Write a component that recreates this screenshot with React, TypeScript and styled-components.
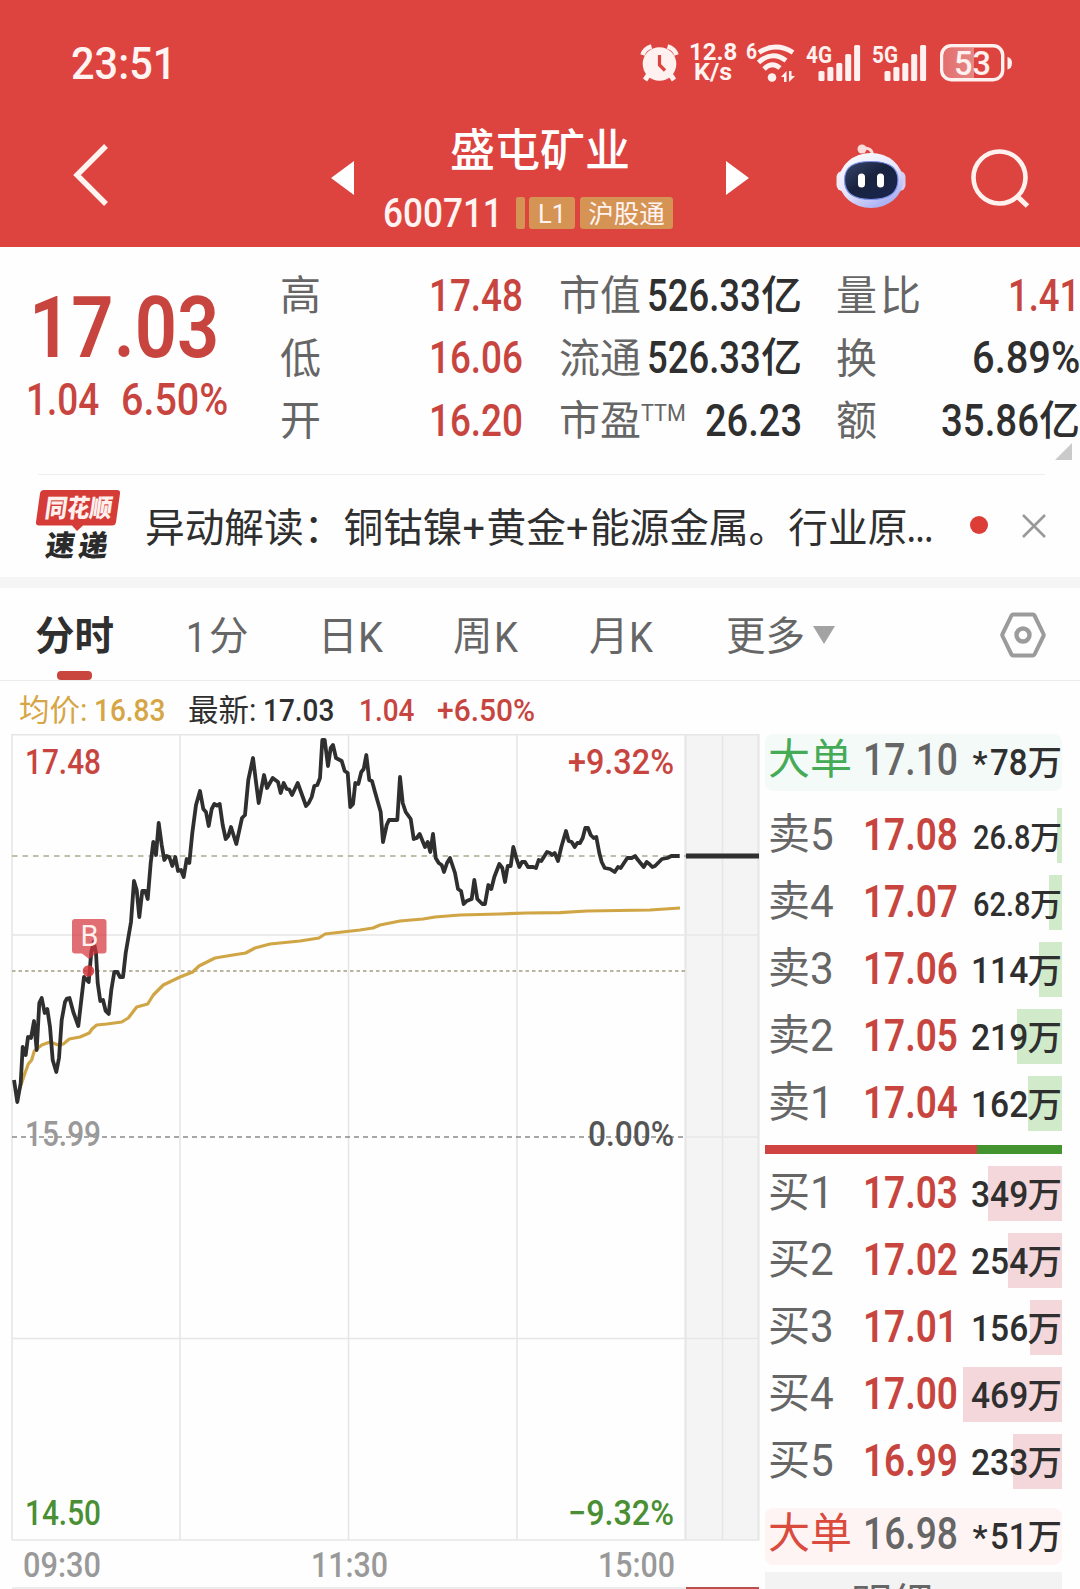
import React, { useLayoutEffect, useRef, useState } from "react";
import styled, { createGlobalStyle } from "styled-components";

const FONT = `Roboto, "Noto Sans CJK SC", sans-serif`;
const RED = "#c8453f";
const INK = "#2f2f2f";
const GREY = "#666666";

const GlobalStyle = createGlobalStyle`
  * { box-sizing: border-box; }
  body { margin: 0; background: #fff; font-family: ${FONT}; color: ${INK}; }
  svg { overflow: visible; }
`;

/* ---------- condensed text ---------- */

const FitBox = styled.span<{ $w: number; $h: number; $size: number; $weight: number; $color?: string }>`
  display: block;
  flex: none;
  width: ${(p) => p.$w}px;
  height: ${(p) => p.$h}px;
  line-height: ${(p) => p.$h}px;
  font-size: ${(p) => p.$size}px;
  font-weight: ${(p) => p.$weight};
  color: ${(p) => p.$color ?? "inherit"};
  white-space: nowrap;
`;

const FitInner = styled.span`
  display: inline-block;
  transform-origin: 0 50%;
`;

type FitProps = { w: number; size: number; h?: number; weight?: number; color?: string; children: string };

/* Squeezes a run of text to a set width, for narrow figures. */
function Fit({ w, size, h = size, weight = 500, color, children }: FitProps) {
  const ref = useRef<HTMLSpanElement>(null);
  const [scale, setScale] = useState(1);
  useLayoutEffect(() => {
    if (ref.current) setScale(w / ref.current.offsetWidth);
  }, [w, size, weight, children]);
  return (
    <FitBox $w={w} $h={h} $size={size} $weight={weight} $color={color}>
      <FitInner ref={ref} style={{ transform: `scaleX(${scale})` }}>
        {children}
      </FitInner>
    </FitBox>
  );
}

/* ---------- page ---------- */

const Page = styled.div`
  width: 1080px;
  height: 1589px;
  overflow: hidden;
  background: #fefefe;
  display: flex;
  flex-direction: column;
`;

/* ---------- header ---------- */

const Header = styled.header`
  flex: none;
  height: 247px;
  background: #dd4440;
  color: #fff4f2;
`;

const StatusBar = styled.div`
  height: 126px;
  padding: 0 67px 0 71px;
  display: flex;
  align-items: center;
`;

const Clock = styled.div`
  padding-top: 4px;
`;

const StatusIcons = styled.div`
  margin-left: auto;
  display: flex;
  align-items: center;
`;

const Speed = styled.div`
  margin: 0 8px 0 11px;
  display: flex;
  flex-direction: column;
  align-items: center;
`;

const Signal = styled.div`
  margin-left: 11px;
  width: 55px;
  height: 36px;
`;

const NavBar = styled.div`
  height: 121px;
  padding: 0 0 0 72px;
  display: flex;
  align-items: flex-start;
`;

const IconSlot = styled.div<{ $ml?: number; $mt: number }>`
  flex: none;
  display: flex;
  margin-left: ${(p) => p.$ml ?? 0}px;
  margin-top: ${(p) => p.$mt}px;
`;

const TitleBlock = styled.div`
  flex: none;
  width: 300px;
  margin-left: 29px;
  display: flex;
  flex-direction: column;
`;

const StockName = styled.h1`
  margin: 1px 0 0 67px;
  font-size: 45px;
  line-height: 50px;
  font-weight: 500;
  color: #fff;
`;

const CodeRow = styled.div`
  margin-top: 20px;
  height: 32px;
  display: flex;
  align-items: center;
`;

const GoldBar = styled.i`
  flex: none;
  width: 9px;
  height: 32px;
  margin: 0 4px 0 13px;
  border-radius: 2px;
  background: #d59354;
`;

const Badge = styled.span<{ $w: number }>`
  flex: none;
  width: ${(p) => p.$w}px;
  height: 32px;
  margin-right: 5px;
  border-radius: 3px;
  background: #d59354;
  display: flex;
  align-items: center;
  justify-content: center;
  font-size: 25.5px;
  line-height: 32px;
  padding-top: 1px;
`;

/* ---------- quote ---------- */

const Quote = styled.section`
  flex: none;
  height: 227px;
  padding-top: 18px;
  display: grid;
  grid-template-columns: 280px 243px 36px 243px 34px 244px;
  grid-template-rows: 188px;
`;

const PriceBlock = styled.div`
  padding: 21px 0 0 26px;
`;

const LastPrice = styled.div`
  padding-left: 3px;
`;

const ChangeRow = styled.div`
  display: flex;
  gap: 22px;
  padding-top: 8px;
`;

const StatList = styled.div<{ $col: number }>`
  grid-column: ${(p) => p.$col};
  display: flex;
  flex-direction: column;
`;

const Stat = styled.div`
  flex: none;
  height: 62.5px;
  display: flex;
  align-items: center;
  justify-content: space-between;
`;

const StatLabel = styled.span`
  display: flex;
  color: ${GREY};
  font-size: 41px;
  line-height: 50px;
  font-weight: 400;
`;

const Ttm = styled.span`
  display: flex;
  margin-top: 6px;
`;

const StatValue = styled.span`
  display: flex;
  align-items: center;
`;

const Unit = styled.span<{ $size: number }>`
  font-size: ${(p) => p.$size}px;
  line-height: ${(p) => p.$size}px;
  font-weight: 500;
`;

const Corner = styled.i`
  flex: none;
  align-self: flex-end;
  margin: -10px 8px 0 0;
  border-left: 17px solid transparent;
  border-bottom: 17px solid #cacaca;
`;

/* ---------- news ---------- */

const News = styled.section`
  flex: none;
  height: 103px;
  margin: 0 35px 0 38px;
  border-top: 1px solid #eeeeee;
  display: flex;
  align-items: center;
`;

const Brand = styled.div`
  flex: none;
  width: 84px;
  height: 74px;
  margin: -1px 0 0 -2px;
`;

const Headline = styled.p`
  flex: none;
  display: flex;
  width: 809px;
  margin: 5px 0 0 25px;
  font-size: 39.7px;
  line-height: 50px;
  white-space: nowrap;
`;

const Plus = styled.span`
  display: block;
  width: 24px;
`;

const Dot = styled.i`
  flex: none;
  width: 18px;
  height: 18px;
  margin: -2px 34px 0 16px;
  border-radius: 50%;
  background: #dc3d36;
`;

const Band = styled.div`
  flex: none;
  height: 11px;
  background: #f5f5f5;
`;

/* ---------- tabs ---------- */

const Tabs = styled.nav`
  flex: none;
  height: 93px;
  padding: 0 34px 0 35px;
  border-bottom: 1px solid #ebebeb;
  display: flex;
  align-items: stretch;
`;

const Tab = styled.div<{ $active?: boolean; $w: number }>`
  width: ${(p) => p.$w}px;
  padding-top: 19px;
  display: flex;
  flex-direction: column;
  justify-content: space-between;
  font-size: 39.5px;
  line-height: 60px;
  font-weight: ${(p) => (p.$active ? 700 : 400)};
  color: ${(p) => (p.$active ? INK : GREY)};
`;

const TabText = styled.span<{ $gap?: number }>`
  display: flex;
  align-items: center;
  height: 60px;
  gap: ${(p) => p.$gap ?? 0}px;
`;

const Underline = styled.i`
  width: 35px;
  height: 9px;
  margin-left: 22px;
  border-radius: 4px;
  background: #c9463f;
`;

const Caret = styled.i`
  margin: 0 0 4px 8px;
  border: 11px solid transparent;
  border-top: 18px solid #a3a3a3;
  border-bottom: 0;
`;

const SettingsSlot = styled.div`
  margin: 24px 0 0 auto;
`;

/* ---------- legend ---------- */

const Legend = styled.div`
  flex: none;
  height: 53px;
  padding: 7px 0 0 19px;
  display: flex;
  align-items: center;
`;

const LegendLabel = styled.span<{ $color: string }>`
  font-size: 30.5px;
  line-height: 40px;
  width: 75px;
  white-space: nowrap;
  color: ${(p) => p.$color};
`;

const Space = styled.i<{ $w: number }>`
  flex: none;
  width: ${(p) => p.$w}px;
`;

/* ---------- market area ---------- */

const Market = styled.main`
  flex: 1;
  min-height: 0;
  display: flex;
  overflow: hidden;
`;

const ChartPane = styled.div`
  flex: none;
  width: 765px;
`;

const Book = styled.aside`
  width: 297px;
  flex: none;
  display: flex;
  flex-direction: column;
`;

const Levels = styled.div`
  display: flex;
  flex-direction: column;
  gap: 12px;
`;

const Level = styled.div<{ $bar: number; $tint: string }>`
  flex: none;
  height: 55px;
  padding: 0 0 0 3px;
  display: grid;
  grid-template-columns: 95px 98px 1fr;
  align-items: center;
  background: ${(p) =>
    `linear-gradient(to left, ${p.$tint} ${p.$bar}px, transparent ${p.$bar}px)`};
`;

const BigDeal = styled(Level)<{ $bg: string }>`
  height: 57px;
  border-radius: 8px;
  background: ${(p) => p.$bg};
  padding-bottom: 3px;
`;

const LevelName = styled.span<{ $color: string }>`
  display: flex;
  align-items: center;
  font-size: 42px;
  line-height: 50px;
  padding-bottom: 2px;
  color: ${(p) => p.$color};
`;

const Volume = styled.span`
  display: flex;
  justify-content: flex-end;
  align-items: center;
  padding-top: 4px;
`;

const Ratio = styled.div`
  flex: none;
  height: 9px;
  margin: 14px 0 12px;
  display: grid;
  grid-template-columns: 212px 1fr;
  background: #43942f;
`;

const RatioBuy = styled.i`
  background: #cf4440;
`;

const Detail = styled.div`
  flex: none;
  height: 60px;
  margin-top: 7px;
  background: #f3f3f3;
  color: ${GREY};
  font-size: 41px;
  line-height: 60px;
  padding: 2px 0 0 86px;
`;

const DealGap = styled.div<{ $h: number }>`
  flex: none;
  height: ${(p) => p.$h}px;
`;

/* ---------- icons ---------- */

const AlarmIcon = () => (
  <svg width="37" height="38" viewBox="0 0 37 38">
    <g fill="none" stroke="#fff1ef" strokeLinecap="butt">
      <path d="M1.500 11 Q3.500 4.500 10.500 2.500" strokeWidth="4.500" />
      <path d="M35.500 11 Q33.500 4.500 26.500 2.500" strokeWidth="4.500" />
      <path d="M8 30 L4 36 M29 30 L33 36" strokeWidth="5" />
    </g>
    <circle cx="18.500" cy="20" r="16.800" fill="#fff1ef" />
    <path d="M18.500 11 V21 L24 26.500" fill="none" stroke="#dd4440" strokeWidth="3.200" />
  </svg>
);

const WifiIcon = () => (
  <svg width="50" height="40" viewBox="-1 0 50 40">
    <g fill="none" stroke="#fff1ef" strokeWidth="4.800">
      <path d="M13 9.500 Q30 -1.500 47 9.500" />
      <path d="M12.500 19.500 Q26 7 40 17.500" />
      <path d="M18 26 Q26 18 34 25" />
    </g>
    <circle cx="26" cy="34.500" r="4.300" fill="#fff1ef" />
    <path d="M35 34 L40.500 28 V39 H38 V34Z M43 28 H45.500 V33 H49 L43 39Z" fill="#fff1ef" />
    <text x="0" y="16" fontSize="22" fontWeight="700" textLength="11" lengthAdjust="spacingAndGlyphs" fill="#fff1ef">6</text>
  </svg>
);

const SignalIcon = ({ label }: { label: string }) => (
  <svg width="55" height="38" viewBox="0 0 55 38">
    <text x="0" y="17.500" fontSize="24" fontWeight="700" textLength="26" lengthAdjust="spacingAndGlyphs" fill="#fff1ef">{label}</text>
    {[26, 22, 18, 9, 0].map((y, i) => (
      <rect key={y} x={12.500 + i * 8.900} y={y} width="6" height={36 - y} rx="1.500" fill="#fff1ef" />
    ))}
  </svg>
);

const BatteryIcon = () => (
  <svg width="73" height="38" viewBox="0 0 73 38">
    <defs>
      <linearGradient id="charge" x1="0" x2="1">
        <stop offset="0" stopColor="#e3706f" />
        <stop offset="1" stopColor="#e58785" />
      </linearGradient>
    </defs>
    <path d="M11 4 H34 V34 H11 Q4 34 4 27 V11 Q4 4 11 4Z" fill="url(#charge)" />
    <rect x="1.700" y="1.700" width="61" height="34" rx="9.500" fill="none" stroke="#fff1ef" strokeWidth="3.400" />
    <path d="M67.500 13 Q72 14 72 19 Q72 24.500 67.500 25.500Z" fill="#fff1ef" />
    <text x="14" y="30.500" fontSize="33" fontWeight="500" textLength="37" lengthAdjust="spacingAndGlyphs" fill="#fff1ef">53</text>
  </svg>
);

const BackIcon = () => (
  <svg width="38" height="64" viewBox="0 0 38 64">
    <path d="M34 3 L5 32 L34 61" fill="none" stroke="#fff4f0" strokeWidth="5.400" />
  </svg>
);

const Arrow = ({ flip }: { flip?: boolean }) => (
  <svg width="23" height="34" viewBox="0 0 23 34">
    <path d={flip ? "M0 0 L23 17 L0 34Z" : "M23 0 L0 17 L23 34Z"} fill="#fff" />
  </svg>
);

const RobotIcon = () => (
  <svg width="70" height="66" viewBox="0 0 70 66">
    <defs>
      <linearGradient id="shell" x1="0" y1="0" x2="0.600" y2="1">
        <stop offset="0" stopColor="#ffffff" />
        <stop offset="0.600" stopColor="#e6e4fb" />
        <stop offset="1" stopColor="#aab0f2" />
      </linearGradient>
      <linearGradient id="visor" x1="0" y1="0" x2="1" y2="1">
        <stop offset="0" stopColor="#3a476c" />
        <stop offset="0.450" stopColor="#19233f" />
        <stop offset="1" stopColor="#1a2550" />
      </linearGradient>
    </defs>
    <path d="M26 5 Q36 4 36.500 12" fill="none" stroke="#fbdcdd" strokeWidth="3" />
    <circle cx="26" cy="6" r="4.500" fill="#fbdcdd" />
    <rect x="0.500" y="28" width="12" height="20" rx="6" fill="#f2e9f6" />
    <rect x="57.500" y="28" width="12" height="20" rx="6" fill="#d3cff5" />
    <ellipse cx="35" cy="37.500" rx="32" ry="27.500" fill="url(#shell)" />
    <path d="M35 18.500 C53 18.500 62 24 62 37 C62 50 53 56.500 35 56.500 C17 56.500 8.500 50 8.500 37 C8.500 24 17 18.500 35 18.500Z" fill="url(#visor)" stroke="#7f93ee" strokeWidth="1.200" />
    <rect x="22" y="30.500" width="7" height="14" rx="3.500" fill="#fff" />
    <rect x="41" y="30.500" width="7" height="14" rx="3.500" fill="#fff" />
  </svg>
);

const SearchIcon = () => (
  <svg width="60" height="60" viewBox="0 0 60 60">
    <circle cx="28.500" cy="28.500" r="26" fill="none" stroke="#fff1ee" strokeWidth="4.600" />
    <path d="M46 47 L56.500 57" stroke="#fff1ee" strokeWidth="5" />
  </svg>
);

const BrandLogo = () => (
  <svg width="84" height="74" viewBox="0 0 84 74">
    <path d="M8 1 H81 Q84.500 1 84 4.500 L80 33 Q79.500 36.500 76 36.500 H47 L41 42 L36 36.500 H3 Q-0.500 36.500 0 33 L4 4.500 Q4.500 1 8 1Z" fill="#d53c38" />
    <g fontFamily={FONT} fontWeight="900" transform="skewX(-8)">
      <text x="12" y="28.500" fontSize="25" textLength="67" lengthAdjust="spacingAndGlyphs" fill="#fff0ee">同花顺</text>
      <text x="18" y="67.500" fontSize="29" textLength="62" lengthAdjust="spacing" fill="#2b2b2b">速递</text>
    </g>
  </svg>
);

const CloseIcon = () => (
  <svg width="24" height="24" viewBox="0 0 24 24">
    <path d="M1 1 L23 23 M23 1 L1 23" stroke="#999" strokeWidth="2.600" />
  </svg>
);

const SettingsIcon = () => (
  <svg width="46" height="46" viewBox="0 0 46 46">
    <path d="M13 2.500 H33 Q34 2.500 34.500 3.500 L43.500 22 Q44 23 43.500 24 L34.500 42.500 Q34 43.500 33 43.500 H13 Q12 43.500 11.500 42.500 L2.500 24 Q2 23 2.500 22 L11.500 3.500 Q12 2.500 13 2.500Z" fill="none" stroke="#9b9b9b" strokeWidth="4" />
    <circle cx="23" cy="23" r="6.500" fill="none" stroke="#9b9b9b" strokeWidth="4.400" />
  </svg>
);

/* ---------- chart ---------- */

const PRICE =
  "14,1080 17.3,1102 20.7,1083 22.7,1047 25.7,1055 28,1037 31,1038 34,1021 36.7,1050 39.3,1003 41.7,998 44.7,1013 47.3,1009 50,1027 52.7,1060 56.3,1072 59,1058 61.7,1020 65,1002 67,998.5 69.5,998 73.3,1012 78.3,1026 81.3,1000 84,977 88.7,982 91.3,952 93.7,942 96,953 97.7,983 100.3,1001 103,1000 105.7,1011 108.7,1014 111.3,990 114.3,972 117.3,972 120,977 123,977 125.7,953 131,922 134,881 136.7,890 139.3,917 142.3,891 145.3,891 147.7,899 150.7,863 153.3,842 156,855 158.7,823 161.7,845 164.3,860 166.7,856 169.3,857 172.3,866 175.3,857 178,871 181,870 183.7,877 186.7,859 189.3,863 192.3,833 196,805 200,791 203.3,809 206,812 208.7,826 211.7,809 214.3,804 217,805.5 219.7,804 222.7,825 225.7,839 228.3,836 231,827 236.3,844 242,818 245,815 248.3,780 253,758 256,782 258.7,803 261.7,787 264,775 267,788 272.7,778 278,782 280.7,793 283.7,783 286.7,789 289.3,789.5 292,795 297.7,783 301.7,794 306,806 308.7,803 311.7,797 314.3,786 317.3,785 320,778 322.3,740 324.7,740 328,766 330.7,748 333,745 336,758 341.7,761 344.7,771 347.7,773 350.3,807 353,804 355.3,783 358.3,784 361.3,772 363.7,769 366.3,755 369.3,780 372,781 375,792 380.7,812 383,842 386.7,825 389,820 397.3,820 400,777 402.7,803 405.7,812 410.7,819 413.7,839 416.7,838 419.7,834 425,847 427.7,842 430.3,852 433,834 435.7,858 438.7,863 441.7,865 444,872 447,863 450,858 455,873 458,889 461,891 463.7,904 466.7,901 471.7,899 474.3,880 477.3,899 482.3,904 485,904 488.3,885 491.3,889 494.3,877 499.3,864 502.3,868 505,882 507.7,866 510.7,866 513.3,847 516.3,858 519.3,867 522,862 525,862 528,867 533.3,867 536,868 538.7,860 541.3,861 547,852 550,853 552,855 554.7,853 558,861 561.3,847 566,831 568.7,841 571.7,842 574.7,847 577.3,843 580,843 582.7,838 585.3,828 588,828 590.7,835 593.7,838 596.3,837 599.3,853 601.7,862 604.7,868 610,869 614.7,872 618,867 620.7,868 627.3,858 632,858 635,856 638,860 643.7,867 646.7,862 649.3,864 652.3,867 655,866 662,859 667.3,858 671.3,856 679.7,856";

const AVERAGE =
  "19.3,1090 25,1073 28.3,1064 31.7,1060 34.3,1051 41.7,1045 50,1042 58.3,1045 63.3,1044 69.3,1039 80,1037 89.3,1033 92,1029 96.7,1025 106.7,1024 121.7,1022 128.3,1018 136.7,1007 147.7,1004 153.3,995 163.3,985 180,977 192.7,972 199,966 215,958 233,955 245.7,953 255,948 270,944 300,941 319,938 325,934 360,930 373,928 380,925 400,921 423,919 435,917 460,915 500,914 527,913 560,912.7 587,911 650,910 680,908";

type LabelProps = { x: number; y: number; w: number; color: string; children: string };

const ChartLabel = ({ x, y, w, color, children }: LabelProps) => (
  <text x={x} y={y} textLength={w} lengthAdjust="spacingAndGlyphs" fontSize="34.500" fontWeight="500" fill={color}>
    {children}
  </text>
);

const Chart = () => (
  <svg width="765" height="855" viewBox="0 734 765 855" fontFamily={FONT} display="block">
    <rect x="685.500" y="734" width="73.500" height="806" fill="#f4f4f4" />
    <g stroke="#e6e6e6" strokeWidth="1.600" fill="none">
      <path d="M12 734.800 H759 M12 935 H759 M686 1137 H759 M12 1338.500 H759 M12 1540 H759" />
      <path d="M12 734 V1540 M180 734 V1540 M348.500 734 V1540 M517 734 V1540 M722.500 734 V1540" />
      <path d="M685.500 734 V1540 M758.500 734 V1540" strokeWidth="2.200" />
      <path d="M12 1588 H686" />
    </g>
    <rect x="686" y="1587" width="73" height="2" fill="#b8504c" />
    <g fill="none" strokeWidth="1.500">
      <path d="M12 856 H686" stroke="#ada98f" strokeDasharray="5.500 5" />
      <path d="M12 971 H686" stroke="#a39d82" strokeDasharray="3.500 3" />
      <path d="M12 1137 H684" stroke="#8a8a8a" strokeDasharray="5 4" />
    </g>
    <polyline points={AVERAGE} fill="none" stroke="#d0a545" strokeWidth="3.200" strokeLinejoin="round" />
    <polyline points={PRICE} fill="none" stroke="#2f2f2f" strokeWidth="3.800" strokeLinejoin="round" />
    <rect x="686" y="853.500" width="73" height="5" fill="#2f2f2f" />
    <g fill="#d4363b">
      <path d="M75 919 H103.500 Q106.500 919 106.500 922 V950.500 Q106.500 953.500 103.500 953.500 H96 L89 959 L82 953.500 H75 Q72 953.500 72 950.500 V922 Q72 919 75 919Z" opacity="0.720" />
      <circle cx="88.500" cy="971" r="5.800" opacity="0.850" />
    </g>
    <text x="80.500" y="946" fontSize="29" textLength="18" lengthAdjust="spacingAndGlyphs" fill="#fff1ee">B</text>
    <ChartLabel x={25} y={774} w={76} color={RED}>17.48</ChartLabel>
    <ChartLabel x={25} y={1145.5} w={76} color="#999">15.99</ChartLabel>
    <ChartLabel x={25} y={1525} w={76} color="#4a8f33">14.50</ChartLabel>
    <ChartLabel x={568} y={774} w={106} color={RED}>+9.32%</ChartLabel>
    <ChartLabel x={588} y={1145.5} w={86} color="#555">0.00%</ChartLabel>
    <ChartLabel x={568} y={1525} w={106} color="#4a8f33">−9.32%</ChartLabel>
    <ChartLabel x={23} y={1576.5} w={78} color="#999">09:30</ChartLabel>
    <ChartLabel x={311} y={1576.5} w={77} color="#999">11:30</ChartLabel>
    <ChartLabel x={598} y={1576.5} w={77} color="#999">15:00</ChartLabel>
  </svg>
);

/* ---------- data ---------- */

type Row = { side: string; n: string; price: string; vol: string; bar: number };

const SELLS: Row[] = [
  { side: "卖", n: "5", price: "17.08", vol: "26.8", bar: 5 },
  { side: "卖", n: "4", price: "17.07", vol: "62.8", bar: 13 },
  { side: "卖", n: "3", price: "17.06", vol: "114", bar: 23 },
  { side: "卖", n: "2", price: "17.05", vol: "219", bar: 45 },
  { side: "卖", n: "1", price: "17.04", vol: "162", bar: 34 },
];

const BUYS: Row[] = [
  { side: "买", n: "1", price: "17.03", vol: "349", bar: 74 },
  { side: "买", n: "2", price: "17.02", vol: "254", bar: 54 },
  { side: "买", n: "3", price: "17.01", vol: "156", bar: 32 },
  { side: "买", n: "4", price: "17.00", vol: "469", bar: 99 },
  { side: "买", n: "5", price: "16.99", vol: "233", bar: 49 },
];

const LevelRow = ({ row, tint }: { row: Row; tint: string }) => {
  const small = row.vol.includes(".");
  return (
    <Level $bar={row.bar} $tint={tint}>
      <LevelName $color={GREY}>
        {row.side}
        <Fit w={24} size={44} weight={400}>{row.n}</Fit>
      </LevelName>
      <Fit w={95} size={43.5} weight={600} color={RED}>{row.price}</Fit>
      <Volume>
        <Fit w={57} size={small ? 33 : 36.5}>{row.vol}</Fit>
        <Unit $size={small ? 32 : 34.5}>万</Unit>
      </Volume>
    </Level>
  );
};

const DealRow = ({ color, bg, price, vol }: { color: string; bg: string; price: string; vol: string }) => (
  <BigDeal $bar={0} $tint="" $bg={bg}>
    <LevelName $color={color}>大单</LevelName>
    <Fit w={95} size={43.5} color={GREY}>{price}</Fit>
    <Volume>
      <Fit w={15} size={34} h={28}>*</Fit>
      <Space $w={2} />
      <Fit w={38} size={36.5}>{vol}</Fit>
      <Unit $size={34.5}>万</Unit>
    </Volume>
  </BigDeal>
);

export default function App() {
  return (
    <Page>
      <GlobalStyle />
      <Header>
        <StatusBar>
          <Clock><Fit w={105} size={43.5}>23:51</Fit></Clock>
          <StatusIcons>
            <AlarmIcon />
            <Speed>
              <Fit w={48} size={23} h={20} weight={700}>12.8</Fit>
              <Fit w={38} size={23} h={20} weight={700}>K/s</Fit>
            </Speed>
            <WifiIcon />
            <Signal><SignalIcon label="4G" /></Signal>
            <Signal><SignalIcon label="5G" /></Signal>
            <Space $w={13} />
            <BatteryIcon />
          </StatusIcons>
        </StatusBar>
        <NavBar>
          <IconSlot $mt={17}><BackIcon /></IconSlot>
          <IconSlot $mt={35} $ml={221}><Arrow /></IconSlot>
          <TitleBlock>
            <StockName>盛屯矿业</StockName>
            <CodeRow>
              <Fit w={120} size={41}>600711</Fit>
              <GoldBar />
              <Badge $w={46}>L1</Badge>
              <Badge $w={93}>沪股通</Badge>
            </CodeRow>
          </TitleBlock>
          <IconSlot $mt={35} $ml={43}><Arrow flip /></IconSlot>
          <IconSlot $mt={17} $ml={87}><RobotIcon /></IconSlot>
          <IconSlot $mt={23} $ml={65}><SearchIcon /></IconSlot>
        </NavBar>
      </Header>

      <Quote>
        <PriceBlock>
          <LastPrice><Fit w={190} size={85} weight={600} color={RED}>17.03</Fit></LastPrice>
          <ChangeRow>
            <Fit w={73} size={43.5} color={RED}>1.04</Fit>
            <Fit w={107} size={43.5} color={RED}>6.50%</Fit>
          </ChangeRow>
        </PriceBlock>
        <StatList $col={2}>
          {[["高", "17.48"], ["低", "16.06"], ["开", "16.20"]].map(([k, v]) => (
            <Stat key={k}>
              <StatLabel>{k}</StatLabel>
              <Fit w={94} size={43.5} color={RED}>{v}</Fit>
            </Stat>
          ))}
        </StatList>
        <StatList $col={4}>
          {["市值", "流通"].map((k) => (
            <Stat key={k}>
              <StatLabel>{k}</StatLabel>
              <StatValue>
                <Fit w={114} size={43.5}>526.33</Fit>
                <Unit $size={41}>亿</Unit>
              </StatValue>
            </Stat>
          ))}
          <Stat>
            <StatLabel>
              市盈
              <Ttm><Fit w={45} size={23} weight={400}>TTM</Fit></Ttm>
            </StatLabel>
            <Fit w={97} size={43.5}>26.23</Fit>
          </Stat>
        </StatList>
        <StatList $col={6}>
          <Stat>
            <StatLabel>量<Space $w={3} />比</StatLabel>
            <Fit w={72} size={43.5} color={RED}>1.41</Fit>
          </Stat>
          <Stat>
            <StatLabel>换</StatLabel>
            <Fit w={108} size={43.5}>6.89%</Fit>
          </Stat>
          <Stat>
            <StatLabel>额</StatLabel>
            <StatValue>
              <Fit w={98} size={43.5}>35.86</Fit>
              <Unit $size={41}>亿</Unit>
            </StatValue>
          </Stat>
          <Corner />
        </StatList>
      </Quote>

      <News>
        <Brand><BrandLogo /></Brand>
        <Headline>
          异动解读：铜钴镍<Plus>+</Plus>黄金<Plus>+</Plus>能源金属。行业原
          <Fit w={26} size={38} h={50} weight={600}>...</Fit>
        </Headline>
        <Dot />
        <CloseIcon />
      </News>
      <Band />

      <Tabs>
        <Tab $w={151} $active>
          <TabText>分时</TabText>
          <Underline />
        </Tab>
        <Tab $w={132}><TabText $gap={3}><Fit w={20} size={43} h={47} weight={400}>1</Fit>分</TabText></Tab>
        <Tab $w={135}><TabText>日<Fit w={25} size={43} h={40} weight={400}>K</Fit></TabText></Tab>
        <Tab $w={136}><TabText $gap={1}>周<Fit w={24} size={43} h={40} weight={400}>K</Fit></TabText></Tab>
        <Tab $w={137}><TabText>月<Fit w={24} size={43} h={40} weight={400}>K</Fit></TabText></Tab>
        <Tab $w={130}><TabText>更多<Caret /></TabText></Tab>
        <SettingsSlot><SettingsIcon /></SettingsSlot>
      </Tabs>

      <Legend>
        <LegendLabel $color="#d6a545">均价:</LegendLabel>
        <Fit w={71} size={31.5} color="#d6a545">16.83</Fit>
        <Space $w={23} />
        <LegendLabel $color={INK}>最新:</LegendLabel>
        <Fit w={71} size={31.5}>17.03</Fit>
        <Space $w={25} />
        <Fit w={55} size={31.5} color={RED}>1.04</Fit>
        <Space $w={23} />
        <Fit w={98} size={31.5} color={RED}>+6.50%</Fit>
      </Legend>

      <Market>
        <ChartPane><Chart /></ChartPane>
        <Book>
          <DealRow color="#45ab57" bg="#f4faf8" price="17.10" vol="78" />
          <DealGap $h={17} />
          <Levels>
            {SELLS.map((r) => <LevelRow key={r.n} row={r} tint="#d0eaca" />)}
          </Levels>
          <Ratio><RatioBuy /></Ratio>
          <Levels>
            {BUYS.map((r) => <LevelRow key={r.n} row={r} tint="#f3d7da" />)}
          </Levels>
          <DealGap $h={19} />
          <DealRow color="#da4a3d" bg="#fff4f4" price="16.98" vol="51" />
          <Detail>明细</Detail>
        </Book>
      </Market>
    </Page>
  );
}
